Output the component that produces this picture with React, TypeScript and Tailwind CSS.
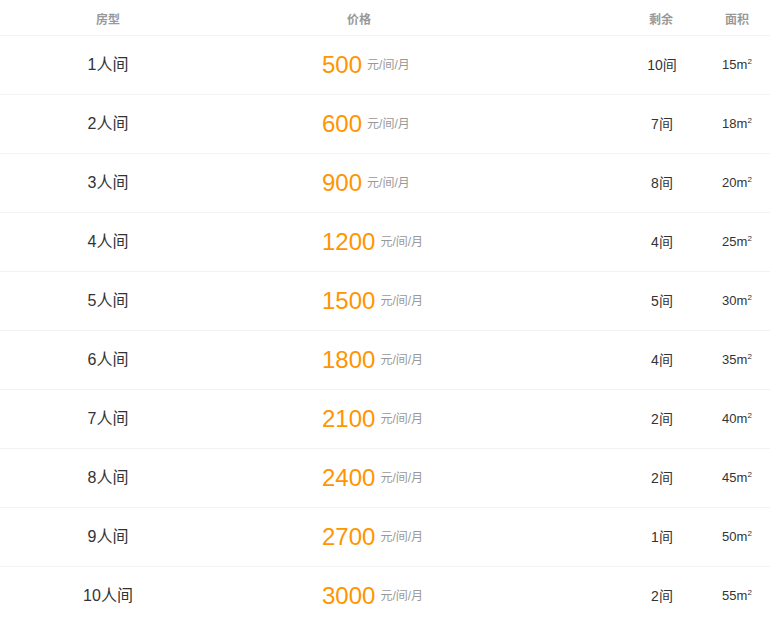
const rooms = [
  { name: '1人间', price: 500, left: 10, area: 15 },
  { name: '2人间', price: 600, left: 7, area: 18 },
  { name: '3人间', price: 900, left: 8, area: 20 },
  { name: '4人间', price: 1200, left: 4, area: 25 },
  { name: '5人间', price: 1500, left: 5, area: 30 },
  { name: '6人间', price: 1800, left: 4, area: 35 },
  { name: '7人间', price: 2100, left: 2, area: 40 },
  { name: '8人间', price: 2400, left: 2, area: 45 },
  { name: '9人间', price: 2700, left: 1, area: 50 },
  { name: '10人间', price: 3000, left: 2, area: 55 },
];

export default function App() {
  return (
    <div
      className="w-[770px] h-[618px] overflow-hidden bg-white"
      style={{ fontFamily: '"Liberation Sans", "Noto Sans CJK SC", sans-serif' }}
    >
      <div className="grid grid-cols-[216px_286px_114px_88px_66px] h-[36px] items-center border-b border-[#f2f2f2] pt-[4px] text-[12px] font-bold text-[#999]">
        <div className="text-center">房型</div>
        <div className="text-center">价格</div>
        <div />
        <div className="text-center pl-[2px]">剩余</div>
        <div className="text-center">面积</div>
      </div>
      {rooms.map((r) => (
        <div
          key={r.name}
          className="grid grid-cols-[216px_286px_114px_88px_66px] h-[59px] items-center border-b border-[#f2f2f2]"
        >
          <div className="text-center text-[16px] text-[#333]">{r.name}</div>
          <div className="flex items-center pl-[106px]">
            <span className="text-[24px] leading-none text-[#ff9500]">{r.price}</span>
            <span className="ml-[5px] text-[12px] text-[#999]">元/间/月</span>
          </div>
          <div />
          <div className="text-center text-[14px] text-[#333] pl-[4px]">{r.left}间</div>
          <div className="text-center text-[13px] text-[#333]">
            {r.area}m<sup className="text-[8px] -top-[0.6em]">2</sup>
          </div>
        </div>
      ))}
    </div>
  );
}
